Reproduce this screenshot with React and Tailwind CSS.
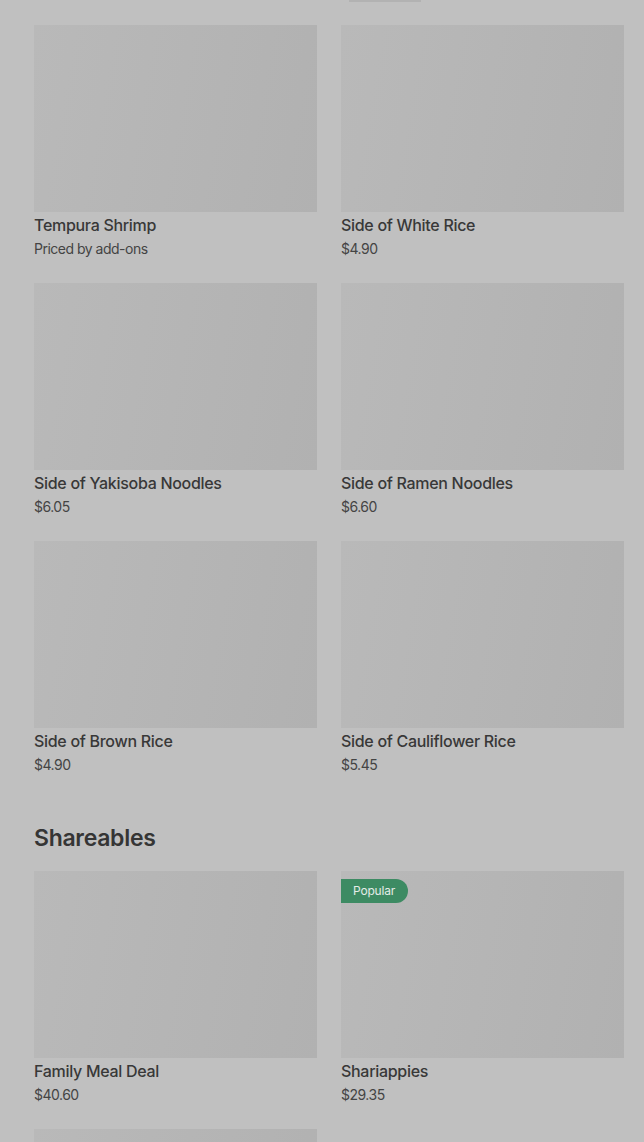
import React from "react";

const rows1 = [
  [
    { name: "Tempura Shrimp", price: "Priced by add-ons" },
    { name: "Side of White Rice", price: "$4.90" },
  ],
  [
    { name: "Side of Yakisoba Noodles", price: "$6.05" },
    { name: "Side of Ramen Noodles", price: "$6.60" },
  ],
  [
    { name: "Side of Brown Rice", price: "$4.90" },
    { name: "Side of Cauliflower Rice", price: "$5.45" },
  ],
];

const shareables = [
  { name: "Family Meal Deal", price: "$40.60" },
  { name: "Shariappies", price: "$29.35", popular: true },
];

function Card({ item }) {
  return (
    <div className="flex flex-col">
      <div className="relative h-[187px] bg-linear-100 from-[#b9b9b9] to-[#b1b1b1]">
        {item.popular && (
          <div className="absolute left-0 top-[8px] flex h-[24px] items-center rounded-r-full bg-[#3d8b63] pl-[12px] pr-[13px] text-[12px] leading-none tracking-[-0.2px] text-[#e4ece7]">
            Popular
          </div>
        )}
      </div>
      <div className="mt-[2px] text-[16px] font-medium leading-[22px] tracking-[-0.3px] text-[#383838]">
        {item.name}
      </div>
      <div className="mt-[3px] text-[14px] leading-[20px] tracking-[-0.5px] text-[#444444]">
        {item.price}
      </div>
    </div>
  );
}

export default function App() {
  return (
    <div
      className="min-h-[1142px] bg-[#c0c0c0] pl-[34px] pr-[20px]"
      style={{ fontFamily: "Inter, 'Noto Sans', sans-serif" }}
    >
      <div className="grid grid-cols-2 gap-x-6">
        <div />
        <div className="ml-[8px] h-[2px] w-[72px] bg-[#b2b2b2]" />
      </div>
      <div className="mt-[23px] grid grid-cols-2 gap-x-6 gap-y-6">
        {rows1.flat().map((it) => (
          <Card key={it.name} item={it} />
        ))}
      </div>
      <h2 className="mt-[49px] text-[23px] font-semibold leading-[28px] tracking-[-0.3px] text-[#353535]">
        Shareables
      </h2>
      <div className="mt-[19px] grid grid-cols-2 gap-x-6 gap-y-6">
        {shareables.map((it) => (
          <Card key={it.name} item={it} />
        ))}
        <div className="h-[187px] bg-linear-100 from-[#b9b9b9] to-[#b1b1b1]" />
      </div>
    </div>
  );
}
